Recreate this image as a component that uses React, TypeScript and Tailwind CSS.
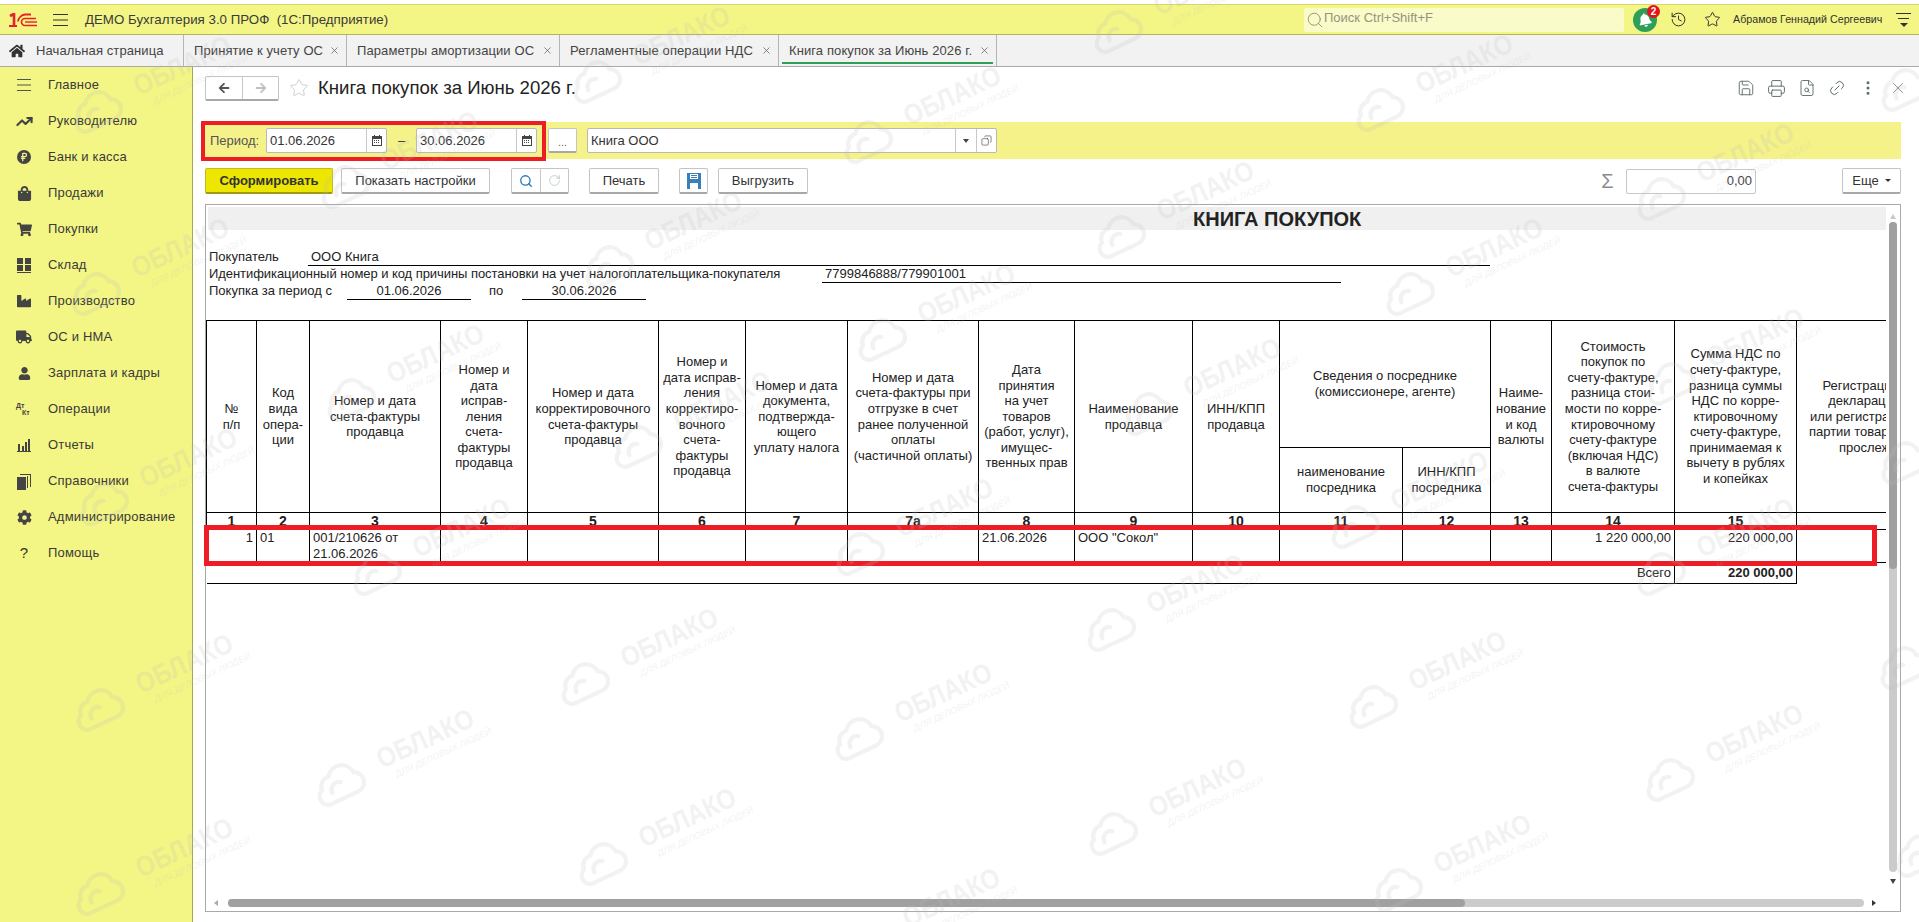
import type { ReactNode } from "react";
import {
  Copy,
  FileSearch,
  History,
  Link2,
  MoreVertical,
  Printer,
  RotateCw,
  RussianRuble,
  Save,
  Search,
  Star,
  TrendingUp,
  X,
} from "lucide-react";
import {
  FaArrowLeft,
  FaArrowRight,
  FaBell,
  FaCog,
  FaHome,
  FaIndustry,
  FaShoppingBag,
  FaShoppingCart,
  FaTruck,
  FaUser,
} from "react-icons/fa";

const sideItems: { label: string; icon: ReactNode }[] = [
  {
    label: "Главное",
    icon: (
      <svg width="14" height="14" viewBox="0 0 14 14" stroke="#555" strokeWidth="1">
        <path d="M0 1.5h14M0 7h14M0 12.5h14" />
      </svg>
    ),
  },
  { label: "Руководителю", icon: <TrendingUp size={17} strokeWidth={3} color="#444" /> },
  {
    label: "Банк и касса",
    icon: (
      <span className="flex h-[14px] w-[14px] items-center justify-center rounded-full bg-[#444]">
        <RussianRuble size={10} strokeWidth={3} color="#f3f585" />
      </span>
    ),
  },
  { label: "Продажи", icon: <FaShoppingBag size={15} color="#444" /> },
  { label: "Покупки", icon: <FaShoppingCart size={15} color="#444" /> },
  {
    label: "Склад",
    icon: (
      <svg width="14" height="15" viewBox="0 0 14 15" fill="#444">
        <path d="M0 0h6v6H0zM8 0h6v6H8zM0 7h6v6H0zM8 7h6v6H8zM0 14h14v1H0z" />
      </svg>
    ),
  },
  { label: "Производство", icon: <FaIndustry size={14} color="#444" /> },
  { label: "ОС и НМА", icon: <FaTruck size={16} color="#444" /> },
  { label: "Зарплата и кадры", icon: <FaUser size={13} color="#444" /> },
  {
    label: "Операции",
    icon: (
      <span className="flex w-[16px] flex-col text-[7px] leading-[7px] font-bold text-[#444]">
        <span>Дт</span>
        <span className="pl-[6px]">Кт</span>
      </span>
    ),
  },
  {
    label: "Отчеты",
    icon: (
      <svg width="14" height="13" viewBox="0 0 14 13" fill="#444">
        <path d="M1 5h2v7H1zM5 7h2v5H5zM8 3h2v9H8zM11 0h2v12h-2zM0 12h14v1H0z" />
      </svg>
    ),
  },
  {
    label: "Справочники",
    icon: (
      <svg width="14" height="17" viewBox="0 0 14 17" fill="#444">
        <path d="M0 4h9v13H0zM10 3h1v12h-1zM12 1H3v1h10v12h1V1z" />
      </svg>
    ),
  },
  { label: "Администрирование", icon: <FaCog size={15} color="#444" /> },
  { label: "Помощь", icon: <span className="text-[15px] text-[#333]">?</span> },
];

const tabs = [
  { label: "Принятие к учету ОС", w: "w-[163px]" },
  { label: "Параметры амортизации ОС", w: "w-[213px]" },
  { label: "Регламентные операции НДС", w: "w-[219px]" },
];

// col widths taken from the ruling of the report
const colWidths = [50, 53, 131, 87, 131, 87, 102, 131, 96, 118, 87, 123, 88, 61, 123, 122, 200];

type HeadCell = { lines: string[]; wide?: boolean };

const headBefore: HeadCell[] = [
  { lines: ["№", "п/п"] },
  { lines: ["Код", "вида", "опера-", "ции"] },
  { lines: ["Номер и дата", "счета-фактуры", "продавца"] },
  { lines: ["Номер и", "дата", "исправ-", "ления", "счета-", "фактуры", "продавца"] },
  { lines: ["Номер и дата", "корректировочного", "счета-фактуры", "продавца"] },
  { lines: ["Номер и", "дата исправ-", "ления", "корректиро-", "вочного", "счета-", "фактуры", "продавца"] },
  { lines: ["Номер и дата", "документа,", "подтвержда-", "ющего", "уплату налога"] },
  { lines: ["Номер и дата", "счета-фактуры при", "отгрузке в счет", "ранее полученной", "оплаты", "(частичной оплаты)"] },
  { lines: ["Дата", "принятия", "на учет", "товаров", "(работ, услуг),", "имущес-", "твенных прав"] },
  { lines: ["Наименование", "продавца"] },
  { lines: ["ИНН/КПП", "продавца"] },
];

const headAfter: HeadCell[] = [
  { lines: ["Наиме-", "нование", "и код", "валюты"] },
  {
    lines: [
      "Стоимость",
      "покупок по",
      "счету-фактуре,",
      "разница стои-",
      "мости по корре-",
      "ктировочному",
      "счету-фактуре",
      "(включая НДС)",
      "в валюте",
      "счета-фактуры",
    ],
  },
  {
    lines: [
      "Сумма НДС по",
      "счету-фактуре,",
      "разница суммы",
      "НДС по корре-",
      "ктировочному",
      "счету-фактуре,",
      "принимаемая к",
      "вычету в рублях",
      "и копейках",
    ],
  },
];

const numbers = ["1", "2", "3", "4", "5", "6", "7", "7а", "8", "9", "10", "11", "12", "13", "14", "15", ""];

// text centres of the watermark, the cloud hangs off each one
const marks = [
  [182, 65], [180, 247], [188, 457], [184, 663], [184, 847],
  [429, 140], [435, 353], [461, 527], [425, 738],
  [681, 35], [693, 220], [722, 400], [669, 637], [687, 817],
  [952, 95], [966, 293], [944, 507], [943, 692], [951, 897],
  [1202, -15], [1205, 190], [1232, 367], [1195, 583], [1197, 787],
  [1464, 63], [1494, 247], [1439, 480], [1457, 660], [1482, 843],
  [1745, 152], [1755, 337], [1745, 527], [1754, 733],
  [1989, 43], [1989, 416], [1988, 621], [2004, 809],
];

function Lines({ lines }: { lines: string[] }) {
  return (
    <>
      {lines.map((l) => (
        <div key={l} className="whitespace-nowrap">
          {l}
        </div>
      ))}
    </>
  );
}

function Btn({ children, className = "" }: { children: ReactNode; className?: string }) {
  return (
    <div
      className={`flex h-[26px] items-center justify-center rounded-[2px] border border-b-2 border-[#c4c4c4] border-b-[#a8a8a8] bg-white text-[13px] text-[#333] ${className}`}
    >
      {children}
    </div>
  );
}

function CalendarIcon() {
  return (
    <svg width="10" height="11" viewBox="0 0 10 11" fill="#444">
      <path d="M0 1h10v10H0zM1 4v6h8V4z" fillRule="evenodd" />
      <path d="M2 0h1v2H2zM7 0h1v2H7zM2 5h1v1H2zM4 5h1v1H4zM6 5h1v1H6zM2 7h1v1H2zM4 7h1v1H4zM6 7h1v1H6z" />
    </svg>
  );
}

function DateField({ value }: { value: string }) {
  return (
    <div className="flex h-[25px] w-[121px] items-center rounded-[2px] border border-[#b9b9b9] bg-white text-[13px] text-[#333]">
      <span className="w-[99px] pl-[3px]">{value}</span>
      <span className="flex h-full flex-1 items-center justify-center border-l border-[#c8c8c8]">
        <CalendarIcon />
      </span>
    </div>
  );
}

export default function App() {
  return (
    <div className="relative flex h-[922px] w-[1919px] flex-col overflow-hidden bg-white font-['Liberation_Sans',Arial,sans-serif] text-[13px] text-[#333]">
      {/* top bar */}
      <div className="h-[4px] bg-white" />
      <div className="flex h-[31px] items-center border-y border-t-[#d6d66a] border-b-[#b4b45c] bg-[#f3f585]">
        <svg width="28" height="14" viewBox="0 0 28 14" className="ml-[9px]" fill="none" stroke="#e8222a">
          <path d="M1 3l4-2.2V14" strokeWidth="2.6" />
          <path d="M0 13h8" strokeWidth="2" />
          <path d="M27 5.5H16a3.5 3.5 0 0 0 0 7h12" strokeWidth="1.6" />
          <path d="M28 9H16" strokeWidth="1.4" />
          <path d="M22 1.5h-6a8 8 0 0 0-7 7" strokeWidth="1.8" />
        </svg>
        <svg width="15" height="12" viewBox="0 0 15 12" className="ml-[16px]" stroke="#333">
          <path d="M0 .5h15M0 6h15M0 11.5h15" />
        </svg>
        <span className="ml-[17px] w-[1219px] whitespace-pre text-[13.3px] text-[#3a3a3a]">ДЕМО Бухгалтерия 3.0 ПРОФ  (1С:Предприятие)</span>
        <div className="flex h-[24px] w-[320px] items-center rounded-[2px] bg-[#f9fbc9] text-[#94947c]">
          <Search size={18} strokeWidth={1.1} className="ml-[2px]" color="#85856f" />
          <span className="pb-[3px] text-[13px]">Поиск Ctrl+Shift+F</span>
        </div>
        <div className="relative ml-[9px] flex h-[24px] w-[24px] items-center justify-center rounded-full bg-[#2e9e58]">
          <FaBell size={14} color="#fff" className="-rotate-12" />
          <span className="absolute right-[-3px] top-[-3px] flex h-[13px] w-[13px] items-center justify-center rounded-full bg-[#e5121c] text-[10px] font-bold text-white">
            2
          </span>
        </div>
        <History size={17} strokeWidth={1.4} color="#333" className="ml-[13px]" />
        <Star size={17} strokeWidth={1.4} color="#333" className="ml-[17px]" />
        <span className="ml-[12px] w-[150px] whitespace-nowrap text-[10.7px] text-[#333]">Абрамов Геннадий Сергеевич</span>
        <div className="ml-[13px] flex w-[15px] flex-col items-center gap-[4px]">
          <div className="h-px w-full bg-[#333]" />
          <div className="h-px w-[11px] bg-[#333]" />
          <div className="h-0 w-0 border-x-[4px] border-t-[4px] border-x-transparent border-t-[#333]" />
        </div>
      </div>

      {/* tabs */}
      <div className="flex h-[32px] border-b border-[#a9a9a9] bg-[#f2f2f2] text-[13px] tracking-[0.1px]">
        <div className="flex w-[184px] items-center border-r border-[#b5b5b5]">
          <FaHome size={16} color="#333" className="ml-[9px]" />
          <span className="ml-[11px] text-[#444]">Начальная страница</span>
        </div>
        {tabs.map((t) => (
          <div key={t.label} className={`flex items-center justify-between border-r border-[#b5b5b5] pl-[10px] pr-[6px] ${t.w}`}>
            <span className="whitespace-nowrap text-[#444]">{t.label}</span>
            <X size={11} strokeWidth={1.5} color="#555" />
          </div>
        ))}
        <div className="relative flex w-[218px] items-center justify-between border-r border-[#b5b5b5] pl-[10px] pr-[6px]">
          <span className="whitespace-nowrap text-[#444]">Книга покупок за Июнь 2026 г.</span>
          <X size={11} strokeWidth={1.5} color="#555" />
          <div className="absolute bottom-[2px] left-[3px] right-[3px] h-[2px] bg-[#2e9e58]" />
        </div>
      </div>

      <div className="flex min-h-0 flex-1">
        {/* sidebar */}
        <div className="w-[193px] shrink-0 border-r border-[#a5a552] bg-[#f3f585]">
          {sideItems.map((item) => (
            <div key={item.label} className="flex h-[36px] items-center">
              <span className="flex w-[48px] justify-center">{item.icon}</span>
              <span className="text-[13px] tracking-[0.2px] text-[#3a3a3a]">{item.label}</span>
            </div>
          ))}
        </div>

        {/* form */}
        <div className="flex min-w-0 flex-1 flex-col pl-[12px] pr-[18px] pt-[9px] pb-[10px]">
          <div className="flex h-[24px] items-center">
            <div className="flex h-[25px] w-[74px] rounded-[2px] border border-b-2 border-[#c4c4c4] border-b-[#a8a8a8]">
              <span className="flex w-[37px] items-center justify-center border-r border-[#c8c8c8]">
                <FaArrowLeft size={12} color="#555" />
              </span>
              <span className="flex flex-1 items-center justify-center">
                <FaArrowRight size={12} color="#c0c0c0" />
              </span>
            </div>
            <Star size={20} strokeWidth={1} color="#c4c4c4" className="ml-[10px]" />
            <span className="ml-[9px] whitespace-nowrap text-[18.6px] text-[#222]">Книга покупок за Июнь 2026 г.</span>
            <div className="ml-auto flex items-center gap-[12px] text-[#5d6e6e]">
              <Save size={18} strokeWidth={1.25} />
              <Printer size={19} strokeWidth={1.25} />
              <FileSearch size={18} strokeWidth={1.25} />
              <Link2 size={18} strokeWidth={1.25} className="-rotate-45" />
              <MoreVertical size={18} strokeWidth={2} className="ml-[1px]" />
              <X size={18} strokeWidth={1} className="mr-[-6px]" />
            </div>
          </div>

          {/* period band */}
          <div className="mt-[22px] flex h-[37px] items-center bg-[#f4f288] pl-[5px]">
            <span className="w-[56px] text-[13px] text-[#555]">Период:</span>
            <DateField value="01.06.2026" />
            <span className="w-[29px] text-center">–</span>
            <DateField value="30.06.2026" />
            <div className="ml-[11px] flex h-[25px] w-[29px] items-end justify-center rounded-[2px] border border-b-2 border-[#c4c4c4] border-b-[#a8a8a8] bg-white pb-[3px] text-[11px] leading-[11px] text-[#666]">
              ...
            </div>
            <div className="ml-[10px] flex h-[25px] w-[410px] items-center rounded-[2px] border border-[#b9b9b9] bg-white">
              <span className="flex-1 pl-[3px]">Книга ООО</span>
              <span className="flex h-full w-[21px] items-center justify-center border-l border-[#c8c8c8]">
                <span className="h-0 w-0 border-x-[3px] border-t-[4px] border-x-transparent border-t-[#444]" />
              </span>
              <span className="flex h-full w-[20px] items-center justify-center border-l border-[#c8c8c8]">
                <Copy size={11} strokeWidth={1.25} color="#333" className="-scale-x-100" />
              </span>
            </div>
          </div>

          {/* command bar */}
          <div className="mt-[9px] flex h-[26px] items-center">
            <Btn className="w-[128px] !border-[#c4bb22] !border-b-[#9f9914] !bg-[#ece600] font-bold">Сформировать</Btn>
            <Btn className="ml-[8px] w-[149px]">Показать настройки</Btn>
            <Btn className="ml-[21px] w-[58px] !justify-start">
              <span className="flex h-full w-[29px] items-center justify-center border-r border-[#c8c8c8]">
                <Search size={14} strokeWidth={2.25} color="#2a76b8" />
              </span>
              <span className="flex h-full flex-1 items-center justify-center">
                <RotateCw size={13} strokeWidth={1.5} color="#b9c4c9" />
              </span>
            </Btn>
            <Btn className="ml-[20px] w-[70px]">Печать</Btn>
            <Btn className="ml-[20px] w-[29px]">
              <svg width="14" height="16" viewBox="0 0 14 16" fill="#3a7fb8">
                <path d="M0 0h14v16H0zM3 1v5h8V1zM4 2h6v1H4zM4 4h6v1H4zM3 10v6h8v-6z" fillRule="evenodd" />
              </svg>
            </Btn>
            <Btn className="ml-[10px] w-[90px]">Выгрузить</Btn>
            <span className="ml-[790px] w-[19px] text-center text-[20px] text-[#8c8c8c]">Σ</span>
            <div className="ml-[9px] flex h-[25px] w-[130px] items-center justify-end rounded-[2px] border border-[#c8c8c8] pr-[3px] text-[13px] text-[#444]">0,00</div>
            <Btn className="ml-auto w-[59px] gap-[6px]">
              Еще
              <span className="h-0 w-0 border-x-[3px] border-t-[3px] border-x-transparent border-t-[#333]" />
            </Btn>
          </div>

          {/* report */}
          <div className="mt-[10px] flex min-h-0 flex-1 flex-col border border-[#a9a9a9]">
            <div className="flex min-h-0 flex-1">
              <div className="min-w-0 flex-1 overflow-hidden pt-[2px]">
                <div className="ml-[2px] flex h-[23px] items-center bg-[#f0f0f0] pl-[985px] text-[20px] font-bold whitespace-nowrap text-[#222]">КНИГА ПОКУПОК</div>
                <div className="mt-[19px] pl-[3px] text-[13px] leading-[16px] text-[#222]">
                  <div className="flex h-[17px]">
                    <span className="w-[99px]">Покупатель</span>
                    <span className="w-[1182px] border-b border-black pl-[3px]">ООО Книга</span>
                  </div>
                  <div className="flex h-[17px]">
                    <span className="w-[613px] whitespace-nowrap tracking-[-0.06px]">Идентификационный номер и код причины постановки на учет налогоплательщика-покупателя</span>
                    <span className="w-[519px] border-b border-black pl-[3px]">7799846888/779901001</span>
                  </div>
                  <div className="flex h-[17px]">
                    <span className="w-[138px] whitespace-nowrap">Покупка за период с</span>
                    <span className="w-[124px] border-b border-black text-center">01.06.2026</span>
                    <span className="w-[51px] pl-[18px]">по</span>
                    <span className="w-[124px] border-b border-black text-center">30.06.2026</span>
                  </div>
                </div>
                <table className="mt-[20px] table-fixed border-collapse text-[13px] leading-[15.6px] text-[#222]" style={{ width: colWidths.reduce((a, b) => a + b, 0) }}>
                  <colgroup>
                    {colWidths.map((w, i) => (
                      <col key={i} style={{ width: w }} />
                    ))}
                  </colgroup>
                  <tbody>
                    <tr className="h-[127px]">
                      {headBefore.map((c) => (
                        <td key={c.lines.join()} rowSpan={2} className="border border-black p-0 text-center align-middle">
                          <Lines lines={c.lines} />
                        </td>
                      ))}
                      <td colSpan={2} className="border border-black p-0 text-center align-middle">
                        <Lines lines={["Сведения о посреднике", "(комиссионере, агенте)"]} />
                      </td>
                      {headAfter.map((c) => (
                        <td key={c.lines.join()} rowSpan={2} className="border border-black p-0 text-center align-middle">
                          <Lines lines={c.lines} />
                        </td>
                      ))}
                      <td rowSpan={2} className="border-y border-black p-0 text-center align-middle">
                        <Lines lines={["Регистрационный номер", "декларации на товары", "или регистрационный номер", "партии товара, подлежащего", "прослеживаемости"]} />
                      </td>
                    </tr>
                    <tr className="h-[65px]">
                      <td className="border border-black p-0 text-center align-middle">
                        <Lines lines={["наименование", "посредника"]} />
                      </td>
                      <td className="border border-black p-0 text-center align-middle">
                        <Lines lines={["ИНН/КПП", "посредника"]} />
                      </td>
                    </tr>
                    <tr className="h-[17px] text-[14px] font-bold leading-[16px]">
                      {numbers.map((n, i) => (
                        <td key={i} className={`border-y border-black p-0 text-center ${i < 16 ? "border-x" : ""}`}>
                          {n}
                        </td>
                      ))}
                    </tr>
                    <tr className="h-[33px]">
                      {colWidths.map((_, i) => (
                        <td key={i} className={`border-y border-black px-[3px] py-0 align-top ${i < 16 ? "border-x" : ""} ${i === 0 || i >= 14 ? "text-right" : ""}`}>
                          {i === 0 && "1"}
                          {i === 1 && "01"}
                          {i === 2 && "001/210626 от 21.06.2026"}
                          {i === 8 && "21.06.2026"}
                          {i === 9 && 'ООО "Сокол"'}
                          {i === 14 && "1 220 000,00"}
                          {i === 15 && "220 000,00"}
                        </td>
                      ))}
                    </tr>
                    <tr className="h-[21px]">
                      <td colSpan={15} className="border-b border-black px-[3px] py-0 text-right">
                        Всего
                      </td>
                      <td className="border-x border-b border-black px-[3px] py-0 text-right font-bold">220 000,00</td>
                      <td className="p-0" />
                    </tr>
                  </tbody>
                </table>
              </div>
              {/* vertical scrollbar */}
              <div className="flex w-[14px] shrink-0 flex-col items-center pt-[9px]">
                <span className="h-0 w-0 border-x-[3px] border-b-[5px] border-x-transparent border-b-[#c8c8c8]" />
                <div className="mt-[3px] h-[650px] w-[8px] rounded-[4px] bg-[#cbcbcb]">
                  <div className="h-[347px] w-full rounded-[4px] bg-[#a0a0a0]" />
                </div>
                <span className="mt-[7px] h-0 w-0 border-x-[3px] border-t-[5px] border-x-transparent border-t-[#444]" />
              </div>
            </div>
            {/* horizontal scrollbar */}
            <div className="mb-[4px] flex h-[8px] shrink-0 items-center pl-[8px]">
              <span className="h-0 w-0 border-y-[3px] border-r-[4px] border-y-transparent border-r-[#aaa]" />
              <div className="ml-[10px] h-[8px] w-[1636px] rounded-[4px] bg-[#cbcbcb]">
                <div className="h-full w-[1237px] rounded-[4px] bg-[#a0a0a0]" />
              </div>
              <span className="ml-[8px] h-0 w-0 border-y-[3px] border-l-[4px] border-y-transparent border-l-[#333]" />
            </div>
          </div>
        </div>
      </div>

      {/* red annotation frames */}
      <div className="absolute left-[201px] top-[121px] h-[40px] w-[345px] border-[4px] border-[#ee1c25]" />
      <div className="absolute left-[204px] top-[525px] h-[41px] w-[1673px] border-[5px] border-[#ee1c25]" />

      {/* watermark */}
      <svg width="1919" height="922" className="pointer-events-none absolute inset-0">
        {marks.map(([x, y]) => (
          <g key={`${x}-${y}`} transform={`translate(${x} ${y}) rotate(-25)`} fill="rgba(190,190,190,0.2)">
            <text x="-52" y="10" fontSize="28" fontWeight="700" textLength="104" lengthAdjust="spacingAndGlyphs">
              ОБЛАКО
            </text>
            <text x="-42" y="24" fontSize="9" fontStyle="italic" textLength="105" lengthAdjust="spacingAndGlyphs">
              ДЛЯ ДЕЛОВЫХ ЛЮДЕЙ
            </text>
            <g transform="translate(-97 5) scale(0.85)" fill="none" stroke="rgba(190,190,190,0.2)" strokeWidth="5" strokeLinecap="round">
              <path d="M-16 18H16A12 12 0 0 0 21-5A16 16 0 0 0-8-13A13 13 0 0 0-22-1A10 10 0 0 0-16 18" />
              <path d="M-12 7A9 9 0 0 1 2-1" />
            </g>
          </g>
        ))}
      </svg>
    </div>
  );
}
